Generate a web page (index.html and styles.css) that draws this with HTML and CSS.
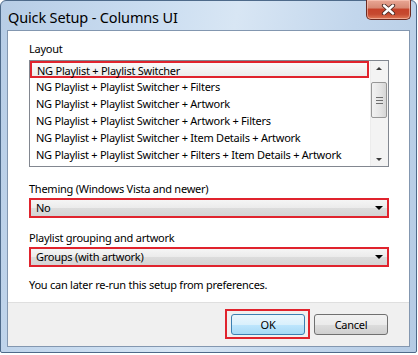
FILE: index.html
```html
<!DOCTYPE html>
<html lang="en">
<head>
    <meta charset="UTF-8">
    <title>Quick Setup - Columns UI</title>
    <link rel="stylesheet" href="styles.css">
</head>
<body>
    <div class="window">
        <div class="titlebar">
            <span class="title">Quick Setup - Columns UI</span>
            <button class="close-btn" aria-label="Close">
                <svg width="17" height="11" viewBox="0 0 17 11">
                    <path d="M4 1.5 L13 9.5 M13 1.5 L4 9.5" stroke="#4a2a24" stroke-width="4.2" stroke-linecap="round"/>
                    <path d="M4 1.5 L13 9.5 M13 1.5 L4 9.5" stroke="#ffffff" stroke-width="2.4" stroke-linecap="round"/>
                </svg>
            </button>
        </div>

        <div class="client">
            <div class="content">
                <div class="label">Layout</div>
                <div class="listbox">
                    <ul class="items">
                        <li class="selected">NG Playlist + Playlist Switcher</li>
                        <li>NG Playlist + Playlist Switcher + Filters</li>
                        <li>NG Playlist + Playlist Switcher + Artwork</li>
                        <li>NG Playlist + Playlist Switcher + Artwork + Filters</li>
                        <li>NG Playlist + Playlist Switcher + Item Details + Artwork</li>
                        <li>NG Playlist + Playlist Switcher + Filters + Item Details + Artwork</li>
                    </ul>
                    <div class="scrollbar">
                        <div class="arrow up"></div>
                        <div class="track">
                            <div class="thumb"><span></span><span></span><span></span></div>
                        </div>
                        <div class="arrow down"></div>
                    </div>
                </div>

                <div class="label spaced">Theming (Windows Vista and newer)</div>
                <div class="combo">No</div>

                <div class="label spaced-sm">Playlist grouping and artwork</div>
                <div class="combo">Groups (with artwork)</div>

                <p class="note">You can later re-run this setup from preferences.</p>
            </div>

            <div class="footer">
                <span class="highlight"><button class="btn default">OK</button></span>
                <button class="btn">Cancel</button>
            </div>
        </div>
    </div>
</body>
</html>
```

FILE: styles.css
```css
html, body {
    margin: 0;
    padding: 0;
}
body {
    width: 418px;
    height: 355px;
    overflow: hidden;
    background: #ffffff;
    font-family: "Noto Sans", "Open Sans", sans-serif;
    font-size: 11px;
    letter-spacing: -0.25px;
    color: #000;
}
.window {
    box-sizing: border-box;
    width: 417px;
    height: 353px;
    border: 1px solid #4e6a8a;
    border-radius: 6px 6px 2px 2px;
    background: linear-gradient(100deg, #b7cde6 0%, #c9dcf0 30%, #d8e6f4 50%, #c2d6ec 75%, #b5cbe4 100%);
    padding: 0 6px 6px 6px;
}
.titlebar {
    height: 29px;
    display: flex;
    justify-content: space-between;
    align-items: flex-start;
}
.title {
    margin-top: 6px;
    padding-left: 1px;
    font-size: 14.5px;
    letter-spacing: -0.15px;
    color: #000;
}
.close-btn {
    box-sizing: border-box;
    width: 45px;
    height: 20px;
    margin-top: -1px;
    margin-right: -1px;
    border: 1px solid #6b2b22;
    border-top: none;
    border-radius: 0 0 5px 5px;
    background: linear-gradient(#e9a795 0%, #d88a75 40%, #c6432a 50%, #c64a30 75%, #e07a58 100%);
    box-shadow: inset 0 0 0 1px rgba(255, 210, 195, 0.55);
    display: flex;
    align-items: center;
    justify-content: center;
    padding: 0;
}
.client {
    box-sizing: border-box;
    height: 317px;
    border: 1px solid #8397b0;
    background: #fff;
    display: flex;
    flex-direction: column;
}
.content {
    flex: 1;
    padding: 10px 20px 0 21px;
}
.label {
    line-height: 15px;
    margin-bottom: 4px;
}
.label.spaced {
    margin-top: 14px;
    margin-bottom: 2px;
}
.label.spaced-sm {
    margin-top: 12px;
    margin-bottom: 2px;
}
.listbox {
    box-sizing: border-box;
    height: 107px;
    border: 1px solid #828790;
    display: flex;
}
.items {
    list-style: none;
    margin: 0;
    padding: 0;
    flex: 1;
}
.items li {
    box-sizing: border-box;
    height: 17px;
    line-height: 15px;
    padding: 1px 6px;
    white-space: nowrap;
}
.items li.selected {
    border: 2px solid #e0232d;
    padding: 0 5px;
    margin: 0 1px 0 0;
    background: linear-gradient(#fafafa, #ececec);
}
.scrollbar {
    width: 17px;
    background: #f3f3f3;
    border-left: 1px solid #ececec;
    display: flex;
    flex-direction: column;
}
.arrow {
    height: 17px;
    position: relative;
}
.arrow::after {
    content: "";
    position: absolute;
    left: 5px;
    width: 0;
    height: 0;
    border-left: 3px solid transparent;
    border-right: 3px solid transparent;
}
.arrow.up::after {
    top: 6px;
    border-bottom: 3px solid #3c3c3c;
}
.arrow.down::after {
    top: 9px;
    border-top: 3px solid #3c3c3c;
}
.track {
    flex: 1;
}
.thumb {
    box-sizing: border-box;
    margin: 4px 0 0 0;
    width: 16px;
    height: 36px;
    border: 1px solid #979797;
    border-radius: 2px;
    background: linear-gradient(90deg, #f2f2f2, #e4e4e4 60%, #d6d6d6);
    display: flex;
    flex-direction: column;
    justify-content: center;
    align-items: center;
    gap: 2px;
}
.thumb span {
    width: 7px;
    height: 1px;
    background: #6f6f6f;
}
.combo {
    box-sizing: border-box;
    height: 20px;
    border: 2px solid #e0232d;
    background: linear-gradient(#f5f5f5 0%, #ebebeb 50%, #dcdcdc 51%, #d4d4d4 100%);
    line-height: 16px;
    padding-left: 5px;
    position: relative;
}
.combo::after {
    content: "";
    position: absolute;
    right: 4px;
    top: 6px;
    width: 0;
    height: 0;
    border-left: 4px solid transparent;
    border-right: 4px solid transparent;
    border-top: 4px solid #000;
}
.note {
    margin: 10px 0 0 0;
    line-height: 15px;
}
.footer {
    height: 44px;
    background: #f0f0f0;
    border-top: 1px solid #dfdfdf;
    display: flex;
    justify-content: flex-end;
    align-items: flex-start;
    gap: 4px;
    padding: 6px 21px 0 0;
    box-sizing: border-box;
}
.highlight {
    display: flex;
    border: 2px solid #e0232d;
    padding: 3px 3px 2px 4px;
}
.btn {
    box-sizing: border-box;
    width: 74px;
    height: 21px;
    margin-top: 5px;
    border: 1px solid #707070;
    border-radius: 3px;
    background: linear-gradient(#f2f2f2 0%, #ebebeb 50%, #dddddd 51%, #cfcfcf 100%);
    font-family: inherit;
    font-size: 11px;
    letter-spacing: -0.25px;
    padding: 0;
    color: #000;
}
.btn.default {
    margin-top: 0;
    border-color: #3c7fb1;
    background: linear-gradient(#eaf6fd 0%, #d9f0fc 50%, #bee6fd 51%, #a7d9f5 100%);
}
```
